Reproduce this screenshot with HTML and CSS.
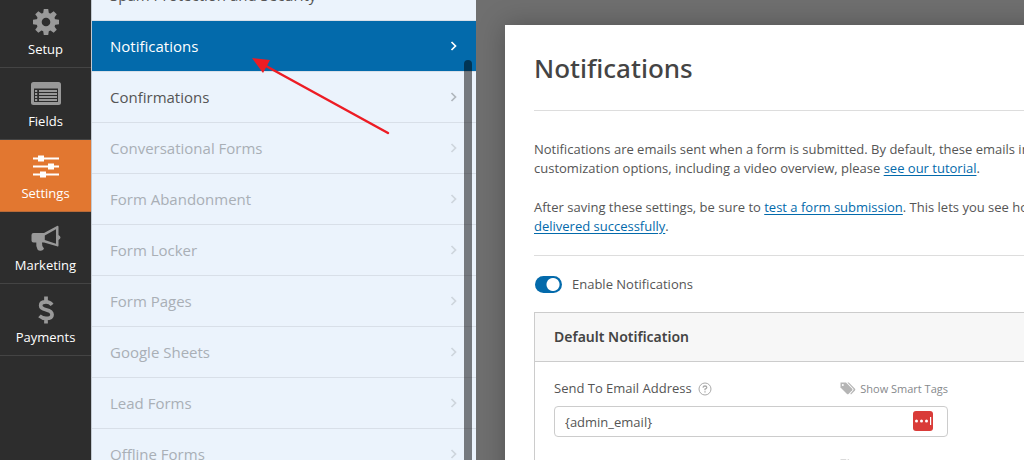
FILE: index.html
```html
<!DOCTYPE html>
<html lang="en">
<head>
<meta charset="utf-8">
<title>Form Builder – Notifications</title>
<link rel="stylesheet" href="styles.css">
</head>
<body>
<svg class="defs" aria-hidden="true">
  <symbol id="chevron" viewBox="0 0 8 12"><path d="M1.500 2l4 4-4 4" fill="none" stroke="currentColor" stroke-width="1.700"/></symbol>
  <symbol id="tags" viewBox="0 0 16 13"><path d="M.5.500V5.500L7 12Q7.800 12.600 8.500 12L12.200 8.300Q12.800 7.500 12.200 6.800L6 .5Z" fill="#b5b5b5"/><circle cx="2.800" cy="2.900" r="1" fill="#fff"/><path d="M7.400.500h1.400l6.200 6.300q.7.800 0 1.600L11 12.400l-.7-.7 3-3.400q.6-.7 0-1.500z" fill="#b5b5b5"/></symbol>
</svg>
<div class="app">
  <nav class="toolbar" aria-label="Builder">
    <button class="tool"><svg class="tool-icon" viewBox="0 0 26 26"><g fill="#999"><circle cx="13" cy="13" r="9.600"/><path id="tooth" d="M10 5L10.800 0h4.400l.8 5v16l-.8 5h-4.400l-.8-5z"/><use href="#tooth" transform="rotate(45 13 13)"/><use href="#tooth" transform="rotate(90 13 13)"/><use href="#tooth" transform="rotate(135 13 13)"/></g><circle cx="13" cy="13" r="4.300" fill="#2d2d2d"/></svg><span>Setup</span></button>
    <button class="tool"><svg class="tool-icon wide" viewBox="0 0 30 26"><rect x="0" y="1" width="30" height="23" rx="2.500" fill="#999"/><path d="M3 7.500h24V21H3z" fill="#2d2d2d"/><path d="M4 9h2.200v2H4zm4 0h18v2H8zM4 12h2.200v2H4zm4 0h18v2H8zM4 15h2.200v2H4zm4 0h18v2H8zM4 18h2.200v2H4zm4 0h18v2H8z" fill="#999"/></svg><span>Fields</span></button>
    <button class="tool active"><svg class="tool-icon" viewBox="0 0 26 26"><path d="M0 5.500h26M0 13.500h26M0 21.500h26" stroke="#fff" stroke-width="2.200"/><path d="M5 2.500h6v6H5zM15 10.500h6v6h-6zM7 18.500h6v6H7z" fill="#fff"/></svg><span>Settings</span></button>
    <button class="tool"><svg class="tool-icon wide" viewBox="0 0 30 26"><path d="M2.500 8H13L26 1q1.500-.6 1.500 1v8q2 1.200 2 2.500T27.500 15v5.500q0 1.600-1.500.8L13 17.500H11q-.4 3 2 6-.5 2-3 2.300-2.500.2-3.500-1.300Q4.800 21 5.300 17.500H2.500Q.5 17.500.5 15.500V10q0-2 2-2z" fill="#999"/><path d="M13.800 10.500L25 4.300v14.400L13.800 15z" fill="#2d2d2d"/></svg><span>Marketing</span></button>
    <button class="tool"><svg class="tool-icon" viewBox="0 0 26 30"><path d="M19.500 9.500Q17 6.400 13 6.400 7.300 6.400 7.300 10.200 7.300 13.300 13 14.700 19.500 16.300 19.500 20 19.500 24 13 24 9 24 6 21.300M13 .5V6M13 24v5.500" fill="none" stroke="#999" stroke-width="4"/></svg><span>Payments</span></button>
  </nav>

  <aside class="sidebar">
    <nav class="sections" aria-label="Settings">
      <a class="section open" href="#spam">Spam Protection and Security<svg class="chevron"><use href="#chevron"/></svg></a>
      <a class="section current" href="#notifications">Notifications<svg class="chevron"><use href="#chevron"/></svg></a>
      <a class="section open" href="#confirmations">Confirmations<svg class="chevron"><use href="#chevron"/></svg></a>
      <a class="section" href="#conversational">Conversational Forms<svg class="chevron"><use href="#chevron"/></svg></a>
      <a class="section" href="#abandonment">Form Abandonment<svg class="chevron"><use href="#chevron"/></svg></a>
      <a class="section" href="#locker">Form Locker<svg class="chevron"><use href="#chevron"/></svg></a>
      <a class="section" href="#pages">Form Pages<svg class="chevron"><use href="#chevron"/></svg></a>
      <a class="section" href="#sheets">Google Sheets<svg class="chevron"><use href="#chevron"/></svg></a>
      <a class="section" href="#lead">Lead Forms<svg class="chevron"><use href="#chevron"/></svg></a>
      <a class="section" href="#offline">Offline Forms<svg class="chevron"><use href="#chevron"/></svg></a>
    </nav>
    <div class="scroll-thumb"></div>
    <svg class="arrow" viewBox="0 0 140 78" aria-hidden="true"><path d="M14 8L136 75" stroke="#ed1c24" stroke-width="2.500" stroke-linecap="round"/><path d="M0 0L18 2 11 15z" fill="#ed1c24"/></svg>
  </aside>

  <main class="stage">
    <section class="panel">
      <h1 class="title">Notifications</h1>
      <div class="intro">
        <p>Notifications are emails sent when a form is submitted. By default, these emails include entry details. For setup and<br>customization options, including a video overview, please <a href="#tutorial">see our tutorial</a>.</p>
        <p>After saving these settings, be sure to <a href="#test">test a form submission</a>. This lets you see how emails will look, and to ensure that they <a href="#delivery">are<br>delivered successfully</a>.</p>
      </div>
      <label class="toggle"><input class="toggle-input" type="checkbox" checked>Enable Notifications</label>
      <section class="card">
        <h2 class="card-title">Default Notification</h2>
        <div class="card-body">
          <div class="field">
            <div class="field-head">
              <label for="email">Send To Email Address</label>
              <svg class="help" viewBox="0 0 14 14" aria-hidden="true"><circle cx="7" cy="7" r="6" fill="none" stroke="#aaa"/><path d="M5 5.700Q5.200 4 7 4t1.800 1.500Q8.800 6.400 7 7.200V8.200M7 9.300v1.300" fill="none" stroke="#aaa" stroke-width="1.300"/></svg>
              <a class="smart" href="#tags-email"><svg class="tags"><use href="#tags"/></svg>Show Smart Tags</a>
            </div>
            <div class="input-wrap">
              <input class="input" id="email" type="text" value="{admin_email}">
              <svg class="vault" viewBox="0 0 20 20" aria-hidden="true"><rect width="20" height="20" rx="3" fill="#d93b38"/><g fill="#fff"><circle cx="3.500" cy="10" r="1.500"/><circle cx="8.500" cy="10" r="1.500"/><circle cx="13.500" cy="10" r="1.500"/><path d="M17 6h1.200v8H17z"/></g></svg>
            </div>
          </div>
          <div class="field">
            <div class="field-head">
              <label for="subject">Email Subject Line</label>
              <a class="smart" href="#tags-subject"><svg class="tags"><use href="#tags"/></svg>Show Smart Tags</a>
            </div>
            <input class="input" id="subject" type="text">
          </div>
        </div>
      </section>
    </section>
  </main>
</div>
</body>
</html>
```
FILE: styles.css
```css
* { box-sizing: border-box; }
body {
  margin: 0;
  font-family: "Open Sans", "Noto Sans", sans-serif;
  font-size: 13px;
  line-height: 19px;
  color: #555;
}
.defs { position: absolute; width: 0; height: 0; }
.app { display: flex; height: 100vh; overflow: hidden; }

.toolbar {
  flex: 0 0 91px;
  display: flex;
  flex-direction: column;
  margin-top: -4px;
  background: #2d2d2d;
}
.tool {
  flex: none;
  display: flex;
  flex-direction: column;
  align-items: center;
  gap: 4px;
  height: 72px;
  padding: 12px 0 0;
  border: 0;
  border-bottom: 1px solid #444;
  background: none;
  color: #fff;
  font: inherit;
}
.tool.active { background: #e27730; border-color: #b86a38; }
.tool-icon { width: 26px; height: 28px; }
.tool-icon.wide { width: 30px; }

.sidebar {
  position: relative;
  flex: 0 0 385px;
  background: #ebf3fc;
  border-left: 1px solid #c3cad2;
}
.sections { margin-top: -30px; }
.section {
  display: flex;
  align-items: center;
  justify-content: space-between;
  height: 51px;
  padding: 0 18px;
  border-bottom: 1px solid #d8dfe8;
  color: #a9afb6;
  font-size: 15px;
  text-decoration: none;
}
.section.open { color: #555; }
.section.current { background: #036aab; color: #fff; }
.chevron { width: 8px; height: 12px; color: #ced5dd; }
.open .chevron { color: #b0b6bd; }
.current .chevron { color: #fff; }
.scroll-thumb {
  position: absolute;
  top: 60px;
  right: 4px;
  bottom: -20px;
  width: 8px;
  border-radius: 4px;
  background: rgba(0, 0, 0, .5);
}
.arrow { position: absolute; left: 160px; top: 58px; width: 140px; height: 78px; }

.stage {
  flex: 1;
  min-width: 0;
  padding: 25px 0 0 29px;
  background: #6f6f6f;
  overflow: hidden;
}
.panel {
  min-width: 760px;
  min-height: 100%;
  padding: 27px 29px;
  background: #fff;
  box-shadow: 0 0 25px rgba(0, 0, 0, .25);
}
.title {
  margin: 0;
  padding-bottom: 26px;
  border-bottom: 1px solid #ddd;
  color: #444;
  font-family: "Noto Sans", "Open Sans", sans-serif;
  font-size: 26px;
  font-weight: 500;
  line-height: 32px;
}
.intro { padding: 29px 0 19px; border-bottom: 1px solid #ddd; white-space: nowrap; }
.intro p { margin: 0; }
.intro p + p { margin-top: 20px; }
.intro a { color: #036aab; text-underline-offset: 2px; }
.toggle { display: flex; align-items: center; gap: 10px; padding: 19px 1px 18px; }
.toggle-input {
  appearance: none;
  width: 27px;
  height: 17px;
  margin: 0;
  border-radius: 9px;
  background: radial-gradient(circle at 18px 50%, #fff 6px, #036aab 7px);
}
.card { border: 1px solid #ccc; }
.card-title {
  margin: 0;
  padding: 14px 19px;
  border-bottom: 1px solid #ccc;
  background: #f7f7f7;
  color: #444;
  font-family: "Noto Sans", "Open Sans", sans-serif;
  font-size: 14px;
  font-weight: 600;
  line-height: 20px;
}
.card-body { display: grid; gap: 19px; padding: 17px 19px; }
.field { width: 394px; }
.field-head { display: flex; align-items: center; gap: 6px; margin-bottom: 8px; }
.help { width: 14px; height: 14px; }
.smart {
  display: flex;
  align-items: center;
  gap: 4px;
  margin-left: auto;
  color: #86898c;
  font-size: 11px;
  text-decoration: none;
}
.tags { width: 16px; height: 13px; }
.input-wrap { position: relative; }
.input {
  display: block;
  width: 100%;
  height: 31px;
  padding: 0 10px;
  border: 1px solid #ccc;
  border-radius: 4px;
  background: #fff;
  color: #555;
  font: inherit;
}
.vault { position: absolute; right: 15px; top: 5px; width: 20px; height: 20px; }
```
